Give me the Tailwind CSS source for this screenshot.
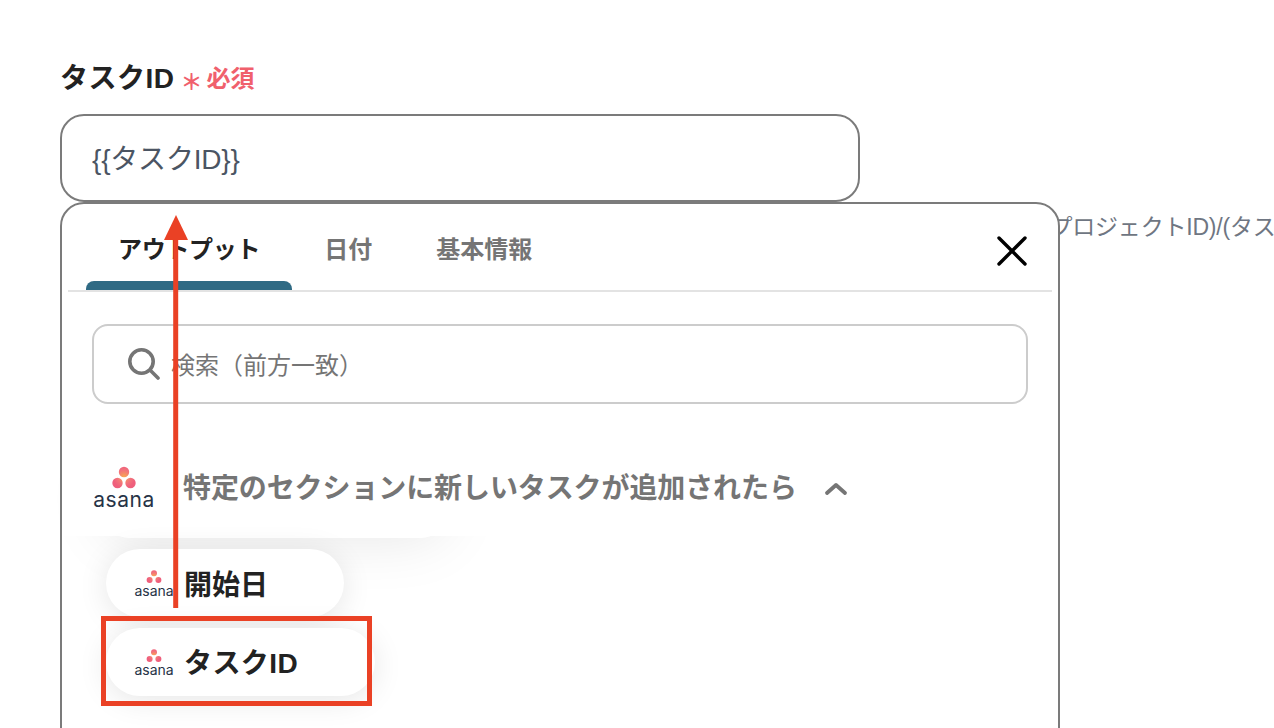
<!DOCTYPE html>
<html lang="ja">
<head>
  <meta charset="UTF-8" />
  <title>タスクID</title>
  <script src="https://cdn.jsdelivr.net/npm/@tailwindcss/browser@4"></script>
</head>
<body class="bg-white font-['Liberation_Sans','Noto_Sans_CJK_JP',sans-serif] text-[#222222]">
  <div class="relative h-[728px] w-[1274px] overflow-hidden">
    <main class="pl-[60px] pt-[57px]">
      <!-- label -->
      <div class="flex h-[42px] items-center">
        <span class="mt-[2px] text-[28px] font-bold leading-[42px] tracking-[0.5px]">タスクID</span>
        <span class="ml-[6px] mt-[9px] text-[22px] font-bold leading-[34px] text-[#f0606c]">＊</span>
        <span class="ml-[4px] mt-[2px] text-[24px] font-bold leading-[34px] text-[#f0606c]">必須</span>
      </div>

      <!-- input -->
      <div class="mt-[15px] flex h-[88px] w-[800px] items-center rounded-[24px] border-2 border-[#7b7b7b] bg-white pl-[30px] pt-[3px] text-[28px] tracking-[-0.2px] text-[#4b5563]">{{タスクID}}</div>

      <!-- popup -->
      <section class="relative z-10 h-[600px] w-[1000px] rounded-[24px] border-2 border-[#7b7b7b] bg-white px-[6px]">
        <!-- shadow of the section card, the white row below hides its upper part -->
        <div class="absolute left-[43px] top-[256px] h-[78px] w-[340px] rounded-[24px] bg-white shadow-[0_0_60px_rgba(0,0,0,0.1)]"></div>

        <div class="relative flex h-[88px] border-b-2 border-[#e3e3e3] pl-[18px]">
          <div class="relative px-[32px] pt-[28px] text-[24px] font-bold leading-[36px] tracking-[-0.3px]">
            アウトプット
            <div class="absolute bottom-0 left-0 h-[9px] w-full rounded-t-[8px] bg-[#2f6a84]"></div>
          </div>
          <div class="px-[32px] pt-[28px] text-[24px] font-bold leading-[36px] text-[#757575]">日付</div>
          <div class="px-[32px] pt-[28px] text-[24px] font-bold leading-[36px] text-[#757575]">基本情報</div>
          <svg class="ml-auto mr-[23px] mt-[30px] h-[34px] w-[34px]" viewBox="0 0 34 34" fill="none" stroke="#000" stroke-width="3.4" stroke-linecap="round">
            <path d="M4 4 30 30M30 4 4 30" />
          </svg>
        </div>

        <div class="relative mx-[24px] mt-[32px] flex h-[80px] items-center rounded-[16px] border-2 border-[#cccccc] pl-[34px] text-[24px] text-[#757575]">
          <svg class="mr-[11px] h-[32px] w-[32px]" viewBox="0 0 32 32" fill="none" stroke="#757575" stroke-width="3.6" stroke-linecap="round">
            <circle cx="13.5" cy="13.5" r="11.7" />
            <path d="M22.5 22.5 30 30" />
          </svg>
          <span class="mt-[4px]">検索（前方一致）</span>
        </div>

        <div class="relative -mx-[6px] flex h-[132px] items-start bg-white pl-[32px] pt-[62px]">
          <div class="flex h-[42px] w-[60px] flex-col items-center">
            <svg class="h-[26px] w-[30px] shrink-0" viewBox="0 0 30 26">
              <defs>
                <radialGradient id="asanaBig" gradientUnits="userSpaceOnUse" cx="15" cy="11" r="11"><stop offset="0" stop-color="#f9a94f" /><stop offset="0.6" stop-color="#f2747a" /><stop offset="1" stop-color="#ef5f7c" /></radialGradient>
              </defs>
              <circle cx="15" cy="6" r="5.2" fill="url(#asanaBig)" />
              <circle cx="8.5" cy="17" r="5.2" fill="url(#asanaBig)" />
              <circle cx="21.5" cy="17" r="5.2" fill="url(#asanaBig)" />
            </svg>
            <span class="-mt-[2px] shrink-0 font-['Inter'] text-[21px] leading-[20px] tracking-[0.5px] text-[#273347]">asana</span>
          </div>
          <span class="ml-[29px] mt-[2px] text-[28px] font-bold leading-[42px] tracking-[-0.1px] text-[#757575]">特定のセクションに新しいタスクが追加されたら</span>
          <svg class="ml-[26px] mt-[15px] h-[16px] w-[26px]" viewBox="0 0 26 16" fill="none" stroke="#757575" stroke-width="3.8" stroke-linecap="round" stroke-linejoin="round">
            <path d="M4 12 13 4 22 12" />
          </svg>
        </div>

        <div class="relative ml-[38px] mt-[13px] flex flex-col items-start gap-[11px]">
          <div class="flex h-[68px] w-[238px] items-center rounded-[34px] bg-white pl-[29px] shadow-[0_4px_30px_rgba(0,0,0,0.1)]">
            <div class="mt-[2px] flex w-[38px] flex-col items-center">
              <svg class="h-[14px] w-[18px]" viewBox="0 0 18 14">
                <defs>
                  <radialGradient id="asanaSmall" gradientUnits="userSpaceOnUse" cx="9" cy="6.4" r="6.5"><stop offset="0" stop-color="#f9a94f" /><stop offset="0.6" stop-color="#f2747a" /><stop offset="1" stop-color="#ef5f7c" /></radialGradient>
                </defs>
                <circle cx="9" cy="3.2" r="3" fill="url(#asanaSmall)" />
                <circle cx="4.6" cy="10" r="3" fill="url(#asanaSmall)" />
                <circle cx="13.4" cy="10" r="3" fill="url(#asanaSmall)" />
              </svg>
              <span class="font-['Inter'] text-[14px] leading-[14px] text-[#273347]">asana</span>
            </div>
            <span class="ml-[11px] mt-[5px] text-[28px] font-bold leading-[42px]">開始日</span>
          </div>
          <div class="flex h-[68px] w-[269px] items-center rounded-[34px] bg-white pl-[29px] shadow-[0_4px_30px_rgba(0,0,0,0.1)]">
            <div class="mt-[2px] flex w-[38px] flex-col items-center">
              <svg class="h-[14px] w-[18px]" viewBox="0 0 18 14">
                <circle cx="9" cy="3.2" r="3" fill="url(#asanaSmall)" />
                <circle cx="4.6" cy="10" r="3" fill="url(#asanaSmall)" />
                <circle cx="13.4" cy="10" r="3" fill="url(#asanaSmall)" />
              </svg>
              <span class="font-['Inter'] text-[14px] leading-[14px] text-[#273347]">asana</span>
            </div>
            <span class="ml-[11px] mt-[3px] text-[28px] font-bold leading-[42px] tracking-[0.4px]">タスクID</span>
          </div>
        </div>
      </section>
    </main>

    <!-- helper text, sits behind the popup -->
    <p class="absolute left-[1042px] top-[209px] whitespace-nowrap text-[23px] leading-[36px] tracking-[-0.2px] text-[#6f7682]">(プロジェクトID)/(タスクID)</p>

    <!-- annotation -->
    <svg class="absolute left-0 top-0 z-20 h-[728px] w-[1274px]" viewBox="0 0 1274 728" fill="none">
      <path d="M175.7 238V608" stroke="#ea4125" stroke-width="5" />
      <path d="M176 215 188 240H164Z" fill="#ea4125" />
      <rect x="103.5" y="618.5" width="266" height="85" stroke="#ea4125" stroke-width="5" />
    </svg>
  </div>
</body>
</html>
